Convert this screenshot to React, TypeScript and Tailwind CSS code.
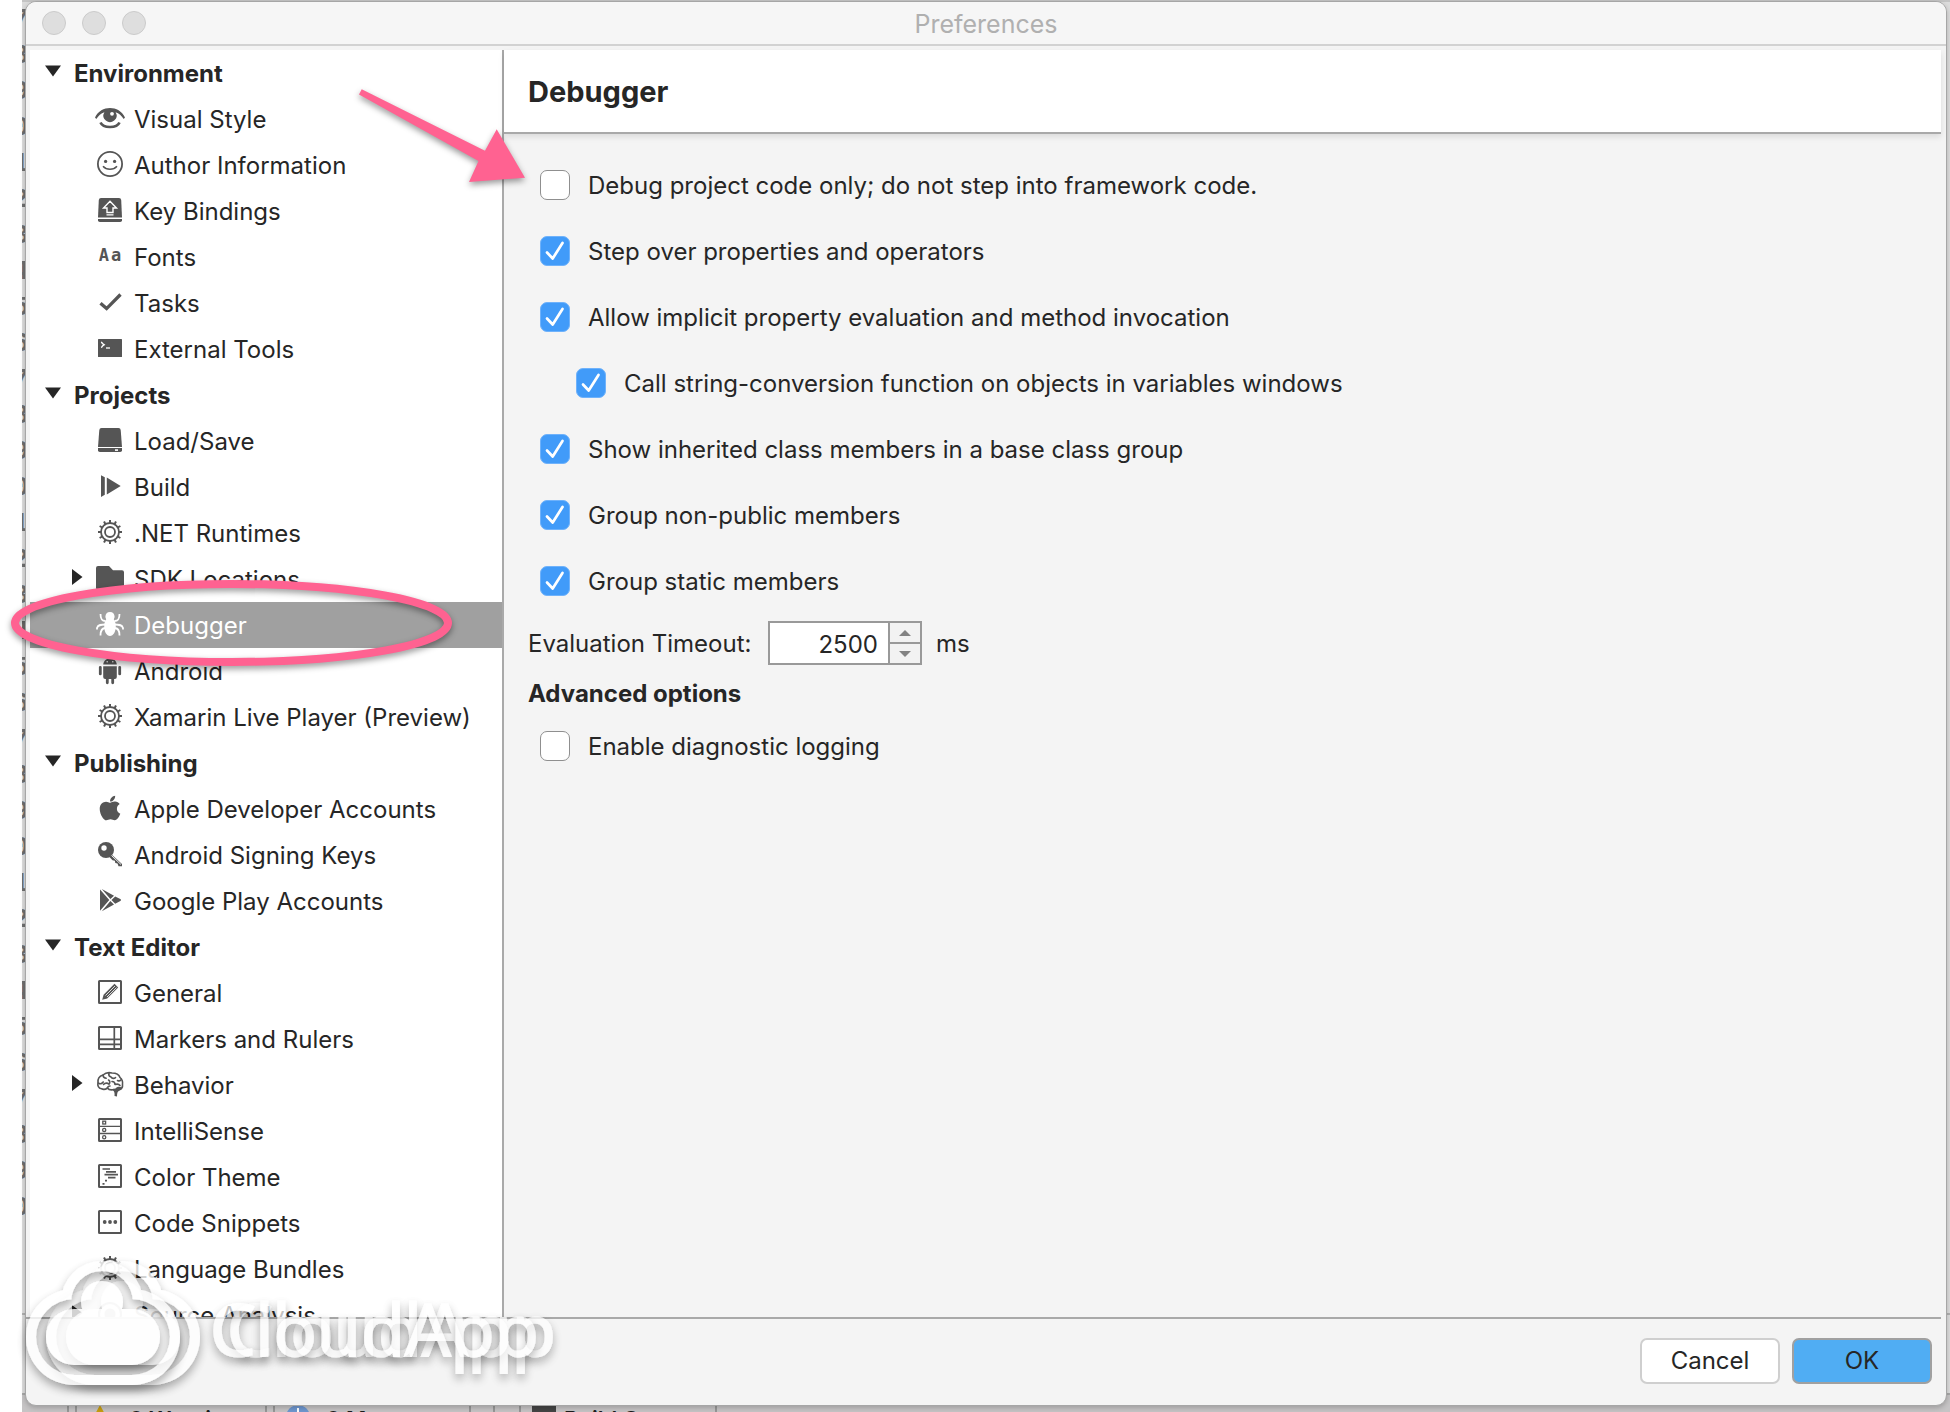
import React from "react";
import { FaApple } from "react-icons/fa";

function Glyph({ children }: { children: React.ReactNode }) {
  return (
    <svg viewBox="0 0 30 30" className="size-[30px]" fill="currentColor" stroke="none" aria-hidden="true">
      {children}
    </svg>
  );
}

function Frame({ children }: { children: React.ReactNode }) {
  return (
    <Glyph>
      <rect x="4" y="3" width="22" height="22" rx="0.5" fill="none" stroke="currentColor" strokeWidth="2" />
      {children}
    </Glyph>
  );
}

const Eye = () => (
  <Glyph>
    <path d="M0 13.5C3 7 9 4 15 4s12 3 15 9.5l-1.3 1.6C26.500 11.500 24 9.500 20.600 8.200A6.500 6.500 0 1 1 9.400 8.200C6 9.500 3.500 11.500 1.300 15.100Z" />
    <circle cx="17" cy="9.800" r="1.900" fill="#fff" />
    <path d="M5.500 18.500C8 24.500 22 24.500 24.500 18.500" fill="none" stroke="currentColor" strokeWidth="2.600" />
  </Glyph>
);
const Smile = () => (
  <Glyph>
    <circle cx="15" cy="14" r="12.100" fill="none" stroke="currentColor" strokeWidth="1.800" />
    <circle cx="10.600" cy="11.400" r="1.600" />
    <circle cx="19.600" cy="11.400" r="1.600" />
    <path d="M8 16.200c3.500 4 10.500 4 14 0" fill="none" stroke="currentColor" strokeWidth="1.500" />
  </Glyph>
);
const KeyCap = () => (
  <Glyph>
    <path d="M6 2h18q2 0 2.200 2L27 21.500H3L3.800 4Q4 2 6 2Z" />
    <path d="M3 23h24v1.200q0 1.800-1.800 1.800H4.800Q3 26 3 24.200Z" />
    <path d="M15 5.200 21.500 12H18v4.500h-6V12H8.500Z" fill="none" stroke="#fff" strokeWidth="1.400" />
    <path d="M11.500 18.800h7" stroke="#fff" strokeWidth="1.300" />
  </Glyph>
);
const Letters = () => (
  <span className="flex h-[30px] w-[30px] justify-center gap-[2px] font-['DejaVu_Sans_Mono',monospace] text-[17px] leading-[26px] font-bold">
    <span>A</span>
    <span>a</span>
  </span>
);
const Tick = () => (
  <Glyph>
    <path d="M5.500 15.200 11.600 20.600 25.500 6.500" fill="none" stroke="currentColor" strokeWidth="3.300" />
  </Glyph>
);
const Terminal = () => (
  <Glyph>
    <rect x="3" y="5" width="24" height="18" rx="0.500" />
    <path d="M6 8.200q1 .2 1.500 1.400l1.700 1.200-1.700 1.200q-.5 1.200-1.500 1.400" fill="none" stroke="#fff" strokeWidth="1.400" />
    <path d="M11 14h4" stroke="#fff" strokeWidth="1.300" />
  </Glyph>
);
const Disk = () => (
  <Glyph>
    <path d="M6.500 2h17q2 0 2.200 2L27 21H3L4.300 4Q4.500 2 6.500 2Z" />
    <path d="M3 22h24v2.200q0 1.800-1.800 1.800H4.800Q3 26 3 24.200Z" />
    <rect x="20" y="23.300" width="3" height="1.600" fill="#fff" />
  </Glyph>
);
const Play = () => (
  <Glyph>
    <path d="M6 3.300 9.800 5.300V22.700L6 25ZM11.800 5.500 25.700 14 11.800 22.500Z" />
  </Glyph>
);
const Gear = () => (
  <Glyph>
    <g fill="none" stroke="currentColor">
      <circle cx="15" cy="14" r="9" strokeWidth="1.800" />
      <circle cx="15" cy="14" r="5" strokeWidth="1.800" />
      {[0, 30, 60, 90, 120, 150, 180, 210, 240, 270, 300, 330].map((a) => (
        <path key={a} d="M15 5V2" strokeWidth="2" transform={`rotate(${a} 15 14)`} />
      ))}
    </g>
  </Glyph>
);
const Folder = () => (
  <Glyph>
    <path d="M1 4q0-2 2-2h11l4 4.300h9q2 0 2 2V24q0 2-2 2H3q-2 0-2-2Z" />
  </Glyph>
);
const Spider = () => (
  <Glyph>
    <path d="M15 2c3 0 4.400 1.800 4.600 4.600 0 1.200-.4 2-.8 2.600 1.400 1.800 2 4.300 2 7 0 5.300-2.400 9.800-5.800 9.800s-5.800-4.500-5.800-9.800c0-2.700.6-5.200 2-7-.4-.6-.8-1.400-.8-2.600C10.600 3.800 12 2 15 2Z" />
    <g fill="none" stroke="currentColor" strokeWidth="1.800">
      <path d="M10.500 11C7 11 5.500 9.500 5.500 4M19.500 11c3.500 0 5-1.500 5-7" />
      <path d="M10 14.500c-3.500 0-7 0-8 3.500v1.500M20 14.500c3.500 0 7 0 8 3.500v1.500" />
      <path d="M10.500 18C7 18 5.500 20 5.500 25.500M19.500 18c3.500 0 5 2 5 7.500" />
    </g>
  </Glyph>
);
const Robot = () => (
  <Glyph>
    <path d="M8.200 8.600c.2-3.600 2.800-6.200 6.800-6.200s6.600 2.600 6.800 6.200Z" />
    <path d="M8.200 10.200h13.600V21q0 2-2 2h-9.600q-2 0-2-2Z" />
    <path d="M5.300 11.300v6.600M24.700 11.300v6.600M12.300 22v4.800M17.700 22v4.800" stroke="currentColor" strokeWidth="2.800" strokeLinecap="round" />
    <circle cx="12.200" cy="5.800" r=".8" fill="#fff" />
    <circle cx="17.800" cy="5.800" r=".8" fill="#fff" />
  </Glyph>
);
const Apple = () => (
  <span className="flex size-[30px] items-start justify-center">
    <FaApple className="size-[28px]" />
  </span>
);
const Key = () => (
  <Glyph>
    <circle cx="11" cy="10" r="8" />
    <circle cx="9" cy="8" r="2.700" fill="#fff" />
    <path d="M15.500 13.500 27 24v2.200h-3.500l-1-2.700-2.200-.4-.5-2.400-2.300-.5L13 15.500Z" />
    <path d="M16.500 15.500 26 24.500" stroke="#fff" strokeWidth=".9" />
  </Glyph>
);
const Store = () => (
  <Glyph>
    <path d="M5 3.500 14.300 14 5 24.800ZM6.800 3 19 9.700 15.400 13.100ZM6.800 25.200 19 18.400 15.400 15ZM20.200 10.400 25.800 13.300v1.500l-5.600 2.900L16.500 14Z" />
  </Glyph>
);
const Pencil = () => (
  <Frame>
    <path d="M7.200 21.800 8.600 16.800 19.500 5.800 23.200 9.500 12.200 20.400Z" />
    <path d="M10.500 17.500 20 8M12 19 21.500 9.500" stroke="#fff" strokeWidth=".8" />
  </Frame>
);
const Rulers = () => (
  <Frame>
    <path d="M19.300 3v22M4 15.300h22M4 20.300h22" stroke="currentColor" strokeWidth="1.700" />
  </Frame>
);
const Brain = () => (
  <Glyph>
    <g fill="none" stroke="currentColor" strokeWidth="1.600" strokeLinecap="round" strokeLinejoin="round">
      <path d="M6.500 18.800C3.500 18 2.300 15.500 3 13 2.500 9 4.500 6 8 5c2.500-2.300 6-2.700 9-2 4 0 7 1.500 8 4.500 2 1.700 3 4 2.500 7 .3 2.500-1 4.500-3.200 5.300-1.600 1.400-4 1.200-5.300-.3-3 .8-5.500 0-6.500-1.500-2 1.500-4.200 1.700-6 .8Z" />
      <path d="M3.200 13c2 1.300 4 .7 5-1M8 5.200c.2 2 1.300 3 3.200 3M14 3c-.6 2 .2 3.400 2 4 1.200 1.600 3 1.800 4.500.6M8.500 14.500c1.600-1.800 4-1.800 5.500-.3 1.300-1.700 1-3.300-.5-4.200M17 11.500c2 0 3 1.200 3 3 2-.6 4-.3 5 1M22.500 10.500c1.500.7 3 .4 3.700-.8M12.500 18c.2-1.200 1.200-2 2.500-2" />
    </g>
    <path d="M15.500 19.500c3.500.5 4.500 2.700 4 6.500l2.500.5c0-3.500.5-5 2.500-6.800 1.300.2 2.400-.8 2.300-2.200-2.200-1.500-5-1-6.300 1Z" />
  </Glyph>
);
const ListBox = () => (
  <Frame>
    <g fill="none" stroke="currentColor" strokeWidth="1.300">
      <path d="M4 10.300h22M4 17.500h22" />
      <rect x="7.800" y="5.200" width="2.800" height="2.800" />
      <circle cx="9.200" cy="13.900" r="1.600" />
      <circle cx="9.200" cy="21.300" r="1.600" />
    </g>
  </Frame>
);
const Theme = () => (
  <Frame>
    <path
      d="M7.500 7H15M11 9.800H21M9.500 12.700H23M13 15.600H20.500M10 18.600h2M7.500 21.800h2"
      stroke="currentColor"
      strokeWidth="1.700"
    />
  </Frame>
);
const Dots = () => (
  <Frame>
    <circle cx="9.700" cy="14" r="1.900" />
    <circle cx="15" cy="14" r="1.900" />
    <circle cx="20.300" cy="14" r="1.900" />
  </Frame>
);
const Target = () => (
  <Glyph>
    <circle cx="15" cy="14" r="11" fill="none" stroke="currentColor" strokeWidth="2" />
    <circle cx="15" cy="14" r="5.500" />
  </Glyph>
);

type Item = { label: string; Icon: () => React.ReactElement; expandable?: boolean };

const SECTIONS: { title: string; items: Item[] }[] = [
  {
    title: "Environment",
    items: [
      { label: "Visual Style", Icon: Eye },
      { label: "Author Information", Icon: Smile },
      { label: "Key Bindings", Icon: KeyCap },
      { label: "Fonts", Icon: Letters },
      { label: "Tasks", Icon: Tick },
      { label: "External Tools", Icon: Terminal },
    ],
  },
  {
    title: "Projects",
    items: [
      { label: "Load/Save", Icon: Disk },
      { label: "Build", Icon: Play },
      { label: ".NET Runtimes", Icon: Gear },
      { label: "SDK Locations", Icon: Folder, expandable: true },
      { label: "Debugger", Icon: Spider },
      { label: "Android", Icon: Robot },
      { label: "Xamarin Live Player (Preview)", Icon: Gear },
    ],
  },
  {
    title: "Publishing",
    items: [
      { label: "Apple Developer Accounts", Icon: Apple },
      { label: "Android Signing Keys", Icon: Key },
      { label: "Google Play Accounts", Icon: Store },
    ],
  },
  {
    title: "Text Editor",
    items: [
      { label: "General", Icon: Pencil },
      { label: "Markers and Rulers", Icon: Rulers },
      { label: "Behavior", Icon: Brain, expandable: true },
      { label: "IntelliSense", Icon: ListBox },
      { label: "Color Theme", Icon: Theme },
      { label: "Code Snippets", Icon: Dots },
      { label: "Language Bundles", Icon: Gear },
      { label: "Source Analysis", Icon: Target, expandable: true },
    ],
  },
];

function Sidebar({ selected, onSelect }: { selected: string; onSelect: (s: string) => void }) {
  return (
    <nav className="w-[472px] shrink-0 overflow-hidden bg-white" aria-label="Preference pages">
      {SECTIONS.map((section) => (
        <div key={section.title}>
          <button type="button" className="flex h-[46px] w-full items-center gap-[13px] pl-[15px] text-left font-bold">
            <svg viewBox="0 0 16 16" className="size-4" fill="currentColor" aria-hidden="true">
              <path d="M0 0.500H16L8 11.500Z" />
            </svg>
            <span className="pt-[2px]">{section.title}</span>
          </button>
          {section.items.map(({ label, Icon, expandable }) => {
            const on = label === selected;
            return (
              <button
                key={label}
                type="button"
                onClick={() => onSelect(label)}
                className={
                  on
                    ? "flex h-[46px] w-full items-center bg-[#a0a0a0] pl-[42px] text-left text-white"
                    : "flex h-[46px] w-full items-center pl-[42px] text-left"
                }
              >
                <span className="mr-3 w-[11px]">
                  {expandable && (
                    <svg viewBox="0 0 11 20" className="h-5 w-[11px]" fill="currentColor" aria-hidden="true">
                      <path d="M0 0 10.500 8 0 16Z" />
                    </svg>
                  )}
                </span>
                <span className={on ? "mr-[9px] text-white" : "mr-[9px] text-[#555555]"}>
                  <Icon />
                </span>
                <span className="pt-[2px]">{label}</span>
              </button>
            );
          })}
        </div>
      ))}
    </nav>
  );
}

function Option({ id, label, checked = false, nested = false }: { id: string; label: string; checked?: boolean; nested?: boolean }) {
  return (
    <div className={nested ? "flex h-[66px] items-center gap-[18px] pl-[48px]" : "flex h-[66px] items-center gap-[18px] pl-3"}>
      <span className="grid size-[30px]">
        <input
          id={id}
          type="checkbox"
          defaultChecked={checked}
          className="peer col-start-1 row-start-1 size-[30px] appearance-none rounded-[7px] border border-[#8f8f8f] bg-white checked:border-[#6fb2fb] checked:bg-[#419bf9]"
        />
        <svg
          viewBox="0 0 30 30"
          className="pointer-events-none invisible col-start-1 row-start-1 size-[30px] peer-checked:visible"
          fill="none"
          stroke="#fff"
          strokeWidth="2.700"
          strokeLinecap="round"
          strokeLinejoin="round"
          aria-hidden="true"
        >
          <path d="M7 16.500 12.700 22.500 22.500 7" />
        </svg>
      </span>
      <label htmlFor={id} className="pt-[2px]">
        {label}
      </label>
    </div>
  );
}

function DebuggerPanel() {
  return (
    <main className="flex min-w-0 flex-1 flex-col">
      <h1 className="flex h-[84px] items-center border-b-2 border-[#a9a9a9] bg-white pt-[2px] pl-6 text-[29px] font-bold shadow-[0_3px_6px_rgba(0,0,0,0.1)]">
        Debugger
      </h1>
      <form className="pt-[18px] pl-6" onSubmit={(e) => e.preventDefault()}>
        <Option id="own-code" label="Debug project code only; do not step into framework code." />
        <Option id="step-over" label="Step over properties and operators" checked />
        <Option id="implicit" label="Allow implicit property evaluation and method invocation" checked />
        <Option id="to-string" label="Call string-conversion function on objects in variables windows" checked nested />
        <Option id="inherited" label="Show inherited class members in a base class group" checked />
        <Option id="non-public" label="Group non-public members" checked />
        <Option id="static" label="Group static members" checked />
        <div className="mt-[7px] flex items-center">
          <label htmlFor="timeout" className="w-[240px] pt-[2px]">
            Evaluation Timeout:
          </label>
          <input
            id="timeout"
            type="text"
            inputMode="numeric"
            defaultValue="2500"
            className="h-11 w-[122px] border-2 border-[#999] bg-white pt-[2px] pr-[10px] text-right"
          />
          <span className="flex h-11 w-8 flex-col border-2 border-l-0 border-[#999] bg-[#f2f2f2]">
            <button type="button" aria-label="Increase" className="flex flex-1 items-center justify-center border-b-2 border-[#999]">
              <svg viewBox="0 0 12 6" className="h-[6px] w-3" fill="#828282" aria-hidden="true">
                <path d="M0 6 6 0 12 6Z" />
              </svg>
            </button>
            <button type="button" aria-label="Decrease" className="flex flex-1 items-center justify-center">
              <svg viewBox="0 0 12 6" className="h-[6px] w-3" fill="#828282" aria-hidden="true">
                <path d="M0 0 6 6 12 0Z" />
              </svg>
            </button>
          </span>
          <span className="ml-[14px] pt-[2px]">ms</span>
        </div>
        <h2 className="mt-2 flex h-10 items-center pt-[2px] font-bold">Advanced options</h2>
        <Option id="logging" label="Enable diagnostic logging" />
      </form>
    </main>
  );
}

function Editor() {
  const lines = Array.from({ length: 34 }, (_, i) => (7 + i) % 10);
  return (
    <div className="col-start-1 row-start-1 flex min-h-0 flex-col overflow-hidden bg-[#dcdcdc] text-[#6f6f6f]" aria-hidden="true">
      <div className="min-h-0 flex-1 overflow-hidden border-t-2 border-[#c4c4c4]">
        <div className="flex w-[7px] flex-col items-end overflow-hidden font-['Liberation_Mono',monospace] text-[28px] leading-[36px] font-bold">
          {lines.map((n, i) => (
            <span key={i}>{n}</span>
          ))}
        </div>
      </div>
      <div className="h-20 shrink-0 border-t-2 border-[#b0b0b0]" />
      <div className="flex h-[19px] shrink-0 overflow-hidden border-t-2 border-[#a8a8a8] bg-[#c6c4c5] pl-[45px] font-['Inter',sans-serif] text-[22px] leading-7 font-semibold text-[#1c1c1c]">
        <div className="mr-[6px] w-[2px] shrink-0 bg-[#979797]" />
        <div className="mr-[6px] flex w-[192px] shrink-0 gap-4 border-x-2 border-[#979797] pt-[10px] pl-[10px]">
          <svg viewBox="0 0 26 24" className="h-6 w-[26px]" aria-hidden="true">
            <path d="M13 0 26 24H0Z" fill="#c79c12" />
          </svg>
          0 Warnings
        </div>
        <div className="mr-[22px] flex w-[198px] shrink-0 gap-4 border-x-2 border-[#979797] pt-[10px] pl-[11px]">
          <svg viewBox="0 0 24 24" className="size-6" aria-hidden="true">
            <circle cx="12" cy="12" r="12" fill="#6f97cf" />
            <path d="M12 3v6" stroke="#fff" strokeWidth="2" />
          </svg>
          0 Messages
        </div>
        <div className="mr-6 w-[2px] shrink-0 bg-[#979797]" />
        <div className="flex w-[198px] shrink-0 gap-2 border-x-2 border-[#979797] pt-[10px] pl-[11px]">
          <span className="mt-px h-5 w-6 bg-[#444]" />
          Build Output
        </div>
      </div>
    </div>
  );
}

function CloudShape({ r, fill }: { r: number; fill: string }) {
  return (
    <g fill={fill}>
      <circle cx="64" cy="88" r={r} />
      <circle cx="122" cy="88" r={r} />
      <circle cx="92" cy="53" r={r - 7} />
      <rect x="64" y="60" width="58" height={28 + r} />
    </g>
  );
}

function Watermark() {
  return (
    <div className="pointer-events-none absolute bottom-0 left-[11px] h-[162px] w-[600px]" aria-hidden="true">
      <svg viewBox="0 0 600 162" className="h-full w-full">
        <defs>
          <mask id="cloud" maskUnits="userSpaceOnUse" x="0" y="0" width="230" height="162">
            <CloudShape r={48} fill="#fff" />
            <CloudShape r={38} fill="#000" />
            <CloudShape r={28} fill="#fff" />
          </mask>
          <filter id="lift" x="-10%" y="-10%" width="120%" height="130%">
            <feDropShadow dx="0" dy="5" stdDeviation="5" floodColor="#000" floodOpacity="0.420" />
          </filter>
        </defs>
        {[20, 0].map((dx) => (
          <g key={dx} transform={`translate(${dx - 1} -1)`} opacity="0.800">
            <g filter="url(#lift)">
              <rect width="230" height="162" fill="#fff" mask="url(#cloud)" />
            </g>
          </g>
        ))}
        {[17, 0].map((dx) => (
          <g key={dx} opacity="0.720">
            <text
              x={199 + dx}
              y="106"
              filter="url(#lift)"
              fill="#fff"
              stroke="#fff"
              strokeWidth="2"
              fontFamily="Open Sans, sans-serif"
              fontSize="72"
            >
              CloudApp
            </text>
          </g>
        ))}
      </svg>
    </div>
  );
}

function Annotations() {
  return (
    <svg
      viewBox="0 0 540 700"
      className="pointer-events-none absolute top-0 left-0 h-[700px] w-[540px] drop-shadow-[0_3px_3px_rgba(0,0,0,0.4)]"
      aria-hidden="true"
    >
      <path d="M361.700 89.300 485 150.700 496.700 129.300 525 177.700 469 182 478.500 161 359 94.500Z" fill="#ff6291" />
      <ellipse cx="231.500" cy="623" rx="216.500" ry="39" fill="none" stroke="#ff6291" strokeWidth="8" />
    </svg>
  );
}

export default function App() {
  const [selected, setSelected] = React.useState("Debugger");
  return (
    <div className="relative grid h-screen grid-cols-1 grid-rows-1 overflow-hidden bg-white pl-[22px] font-['Inter',sans-serif] text-[24px] leading-8 text-[#262626]">
      <Editor />
      <div
        role="dialog"
        aria-labelledby="window-title"
        className="z-10 col-start-1 row-start-1 mx-[3px] mt-px mb-[6px] flex min-h-0 flex-col overflow-hidden rounded-[11px] border border-[#a6a6a6] bg-[#f4f4f4] shadow-[0_2px_5px_rgba(0,0,0,0.2)]"
      >
        <header className="grid h-11 shrink-0 grid-cols-[1fr_auto_1fr] items-center border-b-2 border-[#d2d2d2] bg-[#f6f6f6]">
          <div className="flex gap-4 pl-4">
            {["Close", "Minimize", "Zoom"].map((name) => (
              <button key={name} type="button" aria-label={name} className="size-6 rounded-full border border-[#cbcbcb] bg-[#dedede]" />
            ))}
          </div>
          <span id="window-title" className="pt-[2px] text-[25px] text-[#b0b0b0]">
            Preferences
          </span>
        </header>
        <div className="flex min-h-0 flex-1 pt-1 pr-[5px] pl-1">
          <Sidebar selected={selected} onSelect={setSelected} />
          <div className="w-[2px] shrink-0 bg-[#a9a9a9]" />
          <DebuggerPanel />
        </div>
        <footer className="mr-[5px] flex h-[88px] shrink-0 justify-end gap-3 border-t-2 border-[#a9a9a9] pt-[19px] pr-[9px]">
          <button type="button" className="h-[46px] w-[140px] rounded-[7px] border-2 border-[#cfcfcf] bg-white">
            Cancel
          </button>
          <button type="submit" className="h-[46px] w-[140px] rounded-[7px] border-2 border-[#a0a0a0] bg-[#50adf3]">
            OK
          </button>
        </footer>
      </div>
      <div className="pointer-events-none absolute inset-0 z-20 overflow-hidden">
        <Annotations />
        <Watermark />
      </div>
    </div>
  );
}
